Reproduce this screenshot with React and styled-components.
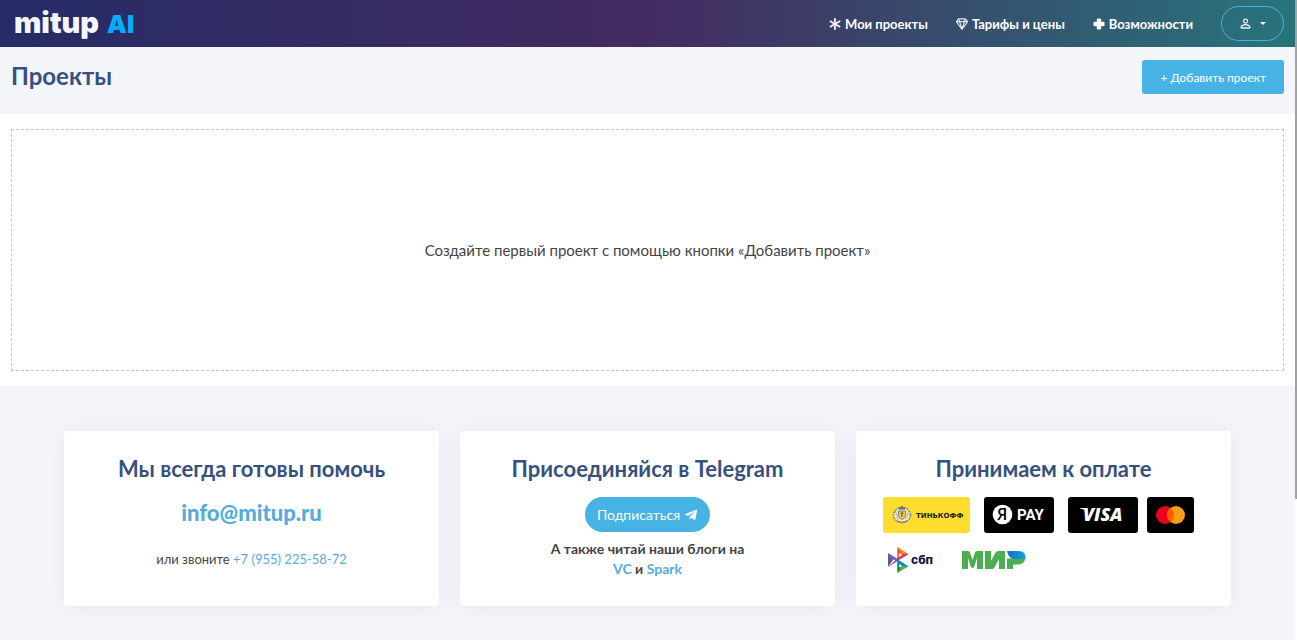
import React from "react";
import styled, { createGlobalStyle } from "styled-components";
import { BsAsterisk, BsGem, BsPerson } from "react-icons/bs";
import { FaTelegramPlane } from "react-icons/fa";

export default function App() {
  return (
    <>
      <GlobalStyle />
      <Shell>
        <Page>
          <Header>
            <Logo href="#home">
              mitup <LogoAccent>AI</LogoAccent>
            </Logo>
            <Nav>
              <NavLink href="#projects">
                <BsAsterisk />
                Мои проекты
              </NavLink>
              <NavLink href="#prices">
                <BsGem />
                Тарифы и цены
              </NavLink>
              <NavLink href="#features">
                <PlusIcon />
                Возможности
              </NavLink>
              <UserButton type="button" aria-label="Профиль">
                <BsPerson />
                <Caret />
              </UserButton>
            </Nav>
          </Header>

          <TitleBar>
            <Title>Проекты</Title>
            <AddButton type="button">+ Добавить проект</AddButton>
          </TitleBar>

          <Main>
            <EmptyBox>
              Создайте первый проект с помощью кнопки «Добавить проект»
            </EmptyBox>
          </Main>

          <Footer>
            <Card>
              <CardTitle>Мы всегда готовы помочь</CardTitle>
              <Email href="mailto:info@mitup.ru">info@mitup.ru</Email>
              <Phone>
                или звоните <a href="tel:+79552255872">+7 (955) 225-58-72</a>
              </Phone>
            </Card>

            <Card>
              <CardTitle>Присоединяйся в Telegram</CardTitle>
              <Subscribe href="#telegram">
                Подписаться <FaTelegramPlane />
              </Subscribe>
              <Blogs>
                А также читай наши блоги на
                <br />
                <a href="#vc">VC</a> и <a href="#spark">Spark</a>
              </Blogs>
            </Card>

            <Card>
              <CardTitle>Принимаем к оплате</CardTitle>
              <Payments>
                <PaymentRow>
                  <Tinkoff />
                  <YandexPay />
                  <CardLogos>
                    <Visa />
                    <Mastercard />
                  </CardLogos>
                </PaymentRow>
                <PaymentRow $wide>
                  <Sbp />
                  <Mir />
                </PaymentRow>
              </Payments>
            </Card>
          </Footer>
        </Page>
        <ScrollTrack>
          <ScrollThumb />
        </ScrollTrack>
      </Shell>
    </>
  );
}

const PlusIcon = () => (
  <svg width="12" height="12" viewBox="0 0 12 12" fill="currentColor">
    <path d="M4 1.5q0-.8.8-.8h2.400q.8 0 .8.8V4h2.500q.8 0 .8.8v2.400q0 .8-.8.8H8v2.500q0 .8-.8.8H4.800q-.8 0-.8-.8V8H1.500q-.8 0-.8-.8V4.800Q.7 4 1.500 4H4z" />
  </svg>
);

const Tinkoff = () => (
  <svg width="87" height="36" viewBox="0 0 87 36" role="img" aria-label="Тинькофф">
    <rect width="87" height="36" rx="3" fill="#ffdd2d" />
    <ellipse cx="19" cy="18" rx="8.5" ry="7" fill="#f1ead0" />
    <ellipse
      cx="19"
      cy="18"
      rx="8.5"
      ry="7.5"
      fill="none"
      stroke="#8d8b83"
      strokeWidth="1.6"
      strokeDasharray="2 1"
    />
    <path
      d="M12.5 14q1 5 3 8M25.5 14q-1 5-3 8"
      fill="none"
      stroke="#a09e96"
      strokeWidth="1.4"
      strokeDasharray="1.5 1"
    />
    <path d="M15.5 9.5 17 11l2-2.500L21 11l1.500-1.500-.5 3h-6z" fill="#6e6c66" />
    <path
      d="M15.5 14h7v4q0 3-3.500 4.500-3.500-1.500-3.500-4.500z"
      fill="#f5d63c"
      stroke="#68665f"
      strokeWidth=".8"
    />
    <path d="M17.5 16h3M19 16v4" stroke="#57554f" strokeWidth="1.2" />
    <path d="M14 24q5 3 10 0" stroke="#77756c" fill="none" />
    <LogoText x="33" y="21" $size={7} $weight={700} $family="DejaVu Sans" fill="#222">
      ТИНЬКОФФ
    </LogoText>
  </svg>
);

const YandexPay = () => (
  <svg width="70" height="36" viewBox="0 0 70 36" role="img" aria-label="Яндекс Pay">
    <rect width="70" height="36" rx="3" />
    <circle cx="18.5" cy="17.5" r="9.8" fill="#fff" />
    <LogoText x="13" y="23" $size={16} $weight={600} $family="Open Sans">
      Я
    </LogoText>
    <LogoText x="33" y="23" $size={15} $weight={700} $family="Roboto" fill="#fff">
      PAY
    </LogoText>
  </svg>
);

const Visa = () => (
  <svg width="70" height="36" viewBox="0 0 70 36" role="img" aria-label="Visa">
    <rect width="70" height="36" rx="3" />
    <LogoText x="15" y="24" $size={18} $weight={800} $family="Open Sans" $italic fill="#fff">
      VISA
    </LogoText>
    <path d="M12 11h6l2 5q-2-3-8-4.500z" fill="#fff" />
  </svg>
);

const Mastercard = () => (
  <svg width="47" height="36" viewBox="0 0 47 36" role="img" aria-label="Mastercard">
    <rect width="47" height="36" rx="3" />
    <circle cx="18" cy="18" r="9" fill="#eb001b" />
    <circle cx="29" cy="18" r="9" fill="#f79e1b" />
    <path d="M23.5 10.900a9 9 0 0 1 0 14.200a9 9 0 0 1 0-14.200z" fill="#ff5f00" />
  </svg>
);

const Sbp = () => (
  <svg width="47" height="26" viewBox="0 0 47 26" role="img" aria-label="СБП">
    <path d="M0 6 5 13 0 20z" fill="#5b57a2" />
    <path d="M9.5 0 20.5 7 9.5 13z" fill="#f08a24" />
    <path d="M9.5 0 13 6l-3.500 6z" fill="#e5542b" />
    <path d="M9.5 13 20.5 19.5 9.5 26z" fill="#60b545" />
    <path d="M9.5 13 13 20l-3.500 6z" fill="#0b7c45" />
    <path d="M20.5 7 14 7 0 20z" fill="#d0346c" />
    <path d="M0 6 20.5 19.5H14z" fill="#1487c9" />
    <path d="M0 6 9.5 12 5 13z" fill="#7d5aa6" />
    <path d="M11 6v4l3.500-2zM11 17v3.500l3-1.500z" fill="#fff" />
    <LogoText x="23" y="17" $size={12} $weight={800} fill="#1d1346">
      сбп
    </LogoText>
  </svg>
);

const Mir = () => (
  <svg width="64" height="20" viewBox="0 0 64 20" role="img" aria-label="МИР">
    <defs>
      <linearGradient id="mirWing">
        <stop offset="0" stopColor="#0a72ba" />
        <stop offset="1" stopColor="#13a5dc" />
      </linearGradient>
    </defs>
    <g fill="#4bae50">
      <path d="M0 19V1h6q1.500 0 2 1.500l2.500 7.500 2.500-7.500Q13.500 1 15 1h6v18h-6V8l-2.500 8Q12 18 10.500 18 9 18 8.500 16L6 8v11z" />
      <path d="M23 19V1h6v10l4.500-8.500Q34.500 1 36 1h7v18h-6V9l-4.500 8.500Q31.500 19 30 19z" />
      <path d="M45 8.500h18.500q-1.500 6-7.500 6H51V19h-6z" />
    </g>
    <path d="M45 1h12q7 0 6.500 8H52q-5 0-7-8z" fill="url(#mirWing)" />
  </svg>
);

const GlobalStyle = createGlobalStyle`
  * {
    box-sizing: border-box;
  }

  body {
    margin: 0;
    font-family: Lato, sans-serif;
    font-size: 14px;
    line-height: 20px;
    color: #444;
    background: #fff;
  }

  a {
    color: #55acdc;
    text-decoration: none;
  }

  button {
    font-family: inherit;
    cursor: pointer;
  }

  svg {
    flex: none;
  }
`;

const LogoText = styled.text`
  font-family: ${(props) => props.$family || "Inter"}, sans-serif;
  font-size: ${(props) => props.$size}px;
  font-weight: ${(props) => props.$weight};
  font-style: ${(props) => (props.$italic ? "italic" : "normal")};
`;

const Shell = styled.div`
  display: flex;
  min-height: 100vh;
`;

const Page = styled.div`
  display: flex;
  flex: 1;
  flex-direction: column;
  min-width: 0;
`;

const ScrollTrack = styled.div`
  width: 2px;
  background: #fff;
`;

const ScrollThumb = styled.div`
  height: 78vh;
  background: #a1a1a1;
`;

const Header = styled.header`
  display: flex;
  align-items: center;
  justify-content: space-between;
  height: 47px;
  padding: 0 11px 0 14px;
  background: linear-gradient(90deg, #262c66 0%, #432b61 50%, #28747b 100%);
`;

const Logo = styled.a`
  display: flex;
  align-items: baseline;
  gap: 8px;
  color: #f5f6fc;
  font-family: Inter, sans-serif;
  font-size: 29px;
  font-weight: 900;
  line-height: 44px;
`;

const LogoAccent = styled.span`
  color: #00aeff;
  font-size: 25px;
`;

const Nav = styled.nav`
  display: flex;
  align-items: center;
`;

const NavLink = styled.a`
  display: flex;
  align-items: center;
  gap: 4px;
  margin-right: 28px;
  color: #fff;
  font-size: 13px;
  font-weight: 700;

  svg {
    width: 12px;
    height: 12px;
    stroke: currentColor;
    stroke-width: 0.4px;
  }
`;

const UserButton = styled.button`
  display: flex;
  align-items: center;
  justify-content: center;
  gap: 8px;
  width: 63px;
  height: 35px;
  border: 1px solid #47b2e4;
  border-radius: 50px;
  color: #fff;
  font-size: 14px;
  background: transparent;

  svg {
    width: 13px;
    height: 13px;
    stroke: currentColor;
    stroke-width: 0.4px;
  }
`;

const Caret = styled.span`
  border: 3px solid transparent;
  border-top-color: #fff;
  border-bottom: 0;
`;

const TitleBar = styled.section`
  display: flex;
  align-items: flex-start;
  justify-content: space-between;
  padding: 13px 11px 20px;
  background: #f3f5fa;
`;

const Title = styled.h1`
  margin: 0;
  color: #37517e;
  font-size: 24px;
  font-weight: 700;
  line-height: 32px;
`;

const AddButton = styled.button`
  height: 34px;
  padding: 0 18px;
  border: 0;
  border-radius: 3px;
  color: #fff;
  font-size: 12px;
  background: #47b2e4;
`;

const Main = styled.main`
  padding: 15px 11px;
`;

const EmptyBox = styled.div`
  display: flex;
  align-items: center;
  justify-content: center;
  min-height: 242px;
  padding: 20px;
  border: 1px dashed #c4c4c4;
  font-size: 15px;
  text-align: center;
`;

const Footer = styled.footer`
  display: grid;
  flex: 1;
  grid-template-columns: repeat(3, 1fr);
  align-items: start;
  gap: 21px;
  padding: 45px 64px 34px;
  background: #f3f5fa;
`;

const Card = styled.section`
  display: flex;
  flex-direction: column;
  align-items: center;
  min-height: 175px;
  padding: 24px;
  border-radius: 4px;
  background: #fff;
  box-shadow: 0 0 25px rgba(0, 0, 0, 0.06);
  text-align: center;
`;

const CardTitle = styled.h2`
  margin: 0 0 14px;
  color: #37517e;
  font-size: 22px;
  font-weight: 700;
  line-height: 28px;
`;

const Email = styled.a`
  font-size: 22px;
  font-weight: 900;
  line-height: 32px;
`;

const Phone = styled.p`
  margin: 20px 0 0;
  font-size: 13px;
`;

const Subscribe = styled.a`
  display: flex;
  align-items: center;
  gap: 4px;
  height: 35px;
  padding: 0 12px;
  border-radius: 50px;
  color: #fff;
  font-size: 14px;
  background: #47b2e4;
`;

const Blogs = styled.p`
  margin: 7px 0 0;
  font-weight: 700;
`;

const Payments = styled.div`
  display: flex;
  flex-direction: column;
  gap: 14px;
  width: 100%;
  padding: 0 3px;
`;

const PaymentRow = styled.div`
  display: flex;
  align-items: center;
  gap: ${(props) => (props.$wide ? "27px" : "14px")};
  padding-left: ${(props) => (props.$wide ? "5px" : "0")};
`;

const CardLogos = styled.div`
  display: flex;
  gap: 9px;
`;
